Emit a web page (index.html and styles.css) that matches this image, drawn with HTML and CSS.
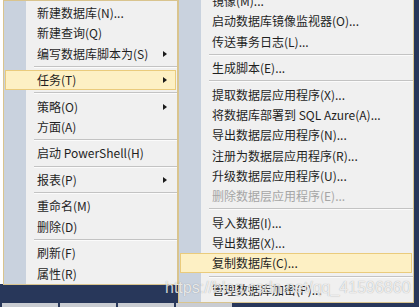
FILE: index.html
```html
<!DOCTYPE html>
<html lang="zh-CN">
<head>
    <meta charset="UTF-8">
    <meta name="viewport" content="width=device-width, initial-scale=1.0">
    <title>任务菜单</title>
    <link rel="stylesheet" href="styles.css">
</head>
<body>
    <div class="screen">
        <div class="explorer"></div>
        <div class="tabs">
            <span></span><span></span><span></span><span></span>
        </div>
    </div>

    <ul class="menu menu-main">
        <li class="item">新建数据库(N)...</li>
        <li class="item">新建查询(Q)</li>
        <li class="item has-sub">编写数据库脚本为(S)</li>
        <li class="sep"></li>
        <li class="item has-sub active">任务(T)</li>
        <li class="sep"></li>
        <li class="item has-sub">策略(O)</li>
        <li class="item">方面(A)</li>
        <li class="sep"></li>
        <li class="item">启动 PowerShell(H)</li>
        <li class="sep"></li>
        <li class="item has-sub">报表(P)</li>
        <li class="sep"></li>
        <li class="item">重命名(M)</li>
        <li class="item">删除(D)</li>
        <li class="sep"></li>
        <li class="item">刷新(F)</li>
        <li class="item">属性(R)</li>
    </ul>

    <ul class="menu menu-sub">
        <li class="item">镜像(M)...</li>
        <li class="item">启动数据库镜像监视器(O)...</li>
        <li class="item">传送事务日志(L)...</li>
        <li class="sep"></li>
        <li class="item">生成脚本(E)...</li>
        <li class="sep"></li>
        <li class="item">提取数据层应用程序(X)...</li>
        <li class="item">将数据库部署到 SQL Azure(A)...</li>
        <li class="item">导出数据层应用程序(N)...</li>
        <li class="item">注册为数据层应用程序(R)...</li>
        <li class="item">升级数据层应用程序(U)...</li>
        <li class="item disabled">删除数据层应用程序(E)...</li>
        <li class="sep"></li>
        <li class="item">导入数据(I)...</li>
        <li class="item">导出数据(X)...</li>
        <li class="item active">复制数据库(C)...</li>
        <li class="sep"></li>
        <li class="item">管理数据库加密(P)...</li>
    </ul>

    <div class="watermark">https://blog.csdn.net/qq_41596860</div>
</body>
</html>
```

FILE: styles.css
```css
body {
    margin: 0;
    background-color: #28375a;
    font-family: "Noto Sans CJK SC", "Noto Sans", sans-serif;
    overflow: hidden;
}
.screen {
    position: relative;
    width: 419px;
    height: 307px;
    display: flex;
    flex-direction: column;
    background-color: #28375a;
}
.explorer {
    width: 178px;
    height: 284px;
    background: #fff;
}
.tabs {
    margin-top: auto;
    height: 4px;
    display: flex;
    gap: 2px;
    padding-left: 2px;
}
.tabs span {
    width: 56px;
    background: #c9ccd2;
}

.menu {
    position: absolute;
    margin: 0;
    padding: 2px 0 0;
    list-style: none;
    box-sizing: border-box;
    border: 1px solid #d9c48e;
    background: linear-gradient(to right, #c9d2de 0, #c9d2de 22px, #f0f0f0 22px);
    font-size: 12px;
    color: #1f1f1f;
}
.menu-main {
    left: 3px;
    top: 0;
    width: 175px;
    height: 285px;
}
.menu-sub {
    left: 178px;
    top: -12px;
    width: 236px;
    height: 315px;
}
.item {
    height: 20.3px;
    display: flex;
    align-items: center;
    padding-left: 33px;
    padding-right: 10px;
    line-height: 16px;
    white-space: nowrap;
}
.item.has-sub::after {
    content: "";
    margin-left: auto;
    border-left: 4px solid #1a1a1a;
    border-top: 3.5px solid transparent;
    border-bottom: 3.5px solid transparent;
}
.item.active {
    margin: 0 1px;
    padding-left: 32px;
    padding-right: 9px;
    background: #fdf0c4;
    box-shadow: inset 0 0 0 1px #eacb7c;
}
.item.disabled {
    color: #a6a6a6;
}
.sep {
    height: 6.2px;
    display: flex;
    align-items: center;
    padding-left: 30px;
}
.sep::after {
    content: "";
    flex: 1;
    height: 1px;
    background: #c3c3c3;
    border-bottom: 1px solid #fbfbfb;
}

.watermark {
    position: absolute;
    left: 165px;
    top: 280px;
    font-family: "Liberation Sans", Arial, sans-serif;
    font-size: 16px;
    line-height: 16px;
    color: rgba(255, 255, 255, 0.8);
    text-shadow: 0 0 1px rgba(0, 0, 0, 0.35);
    white-space: nowrap;
}
```
